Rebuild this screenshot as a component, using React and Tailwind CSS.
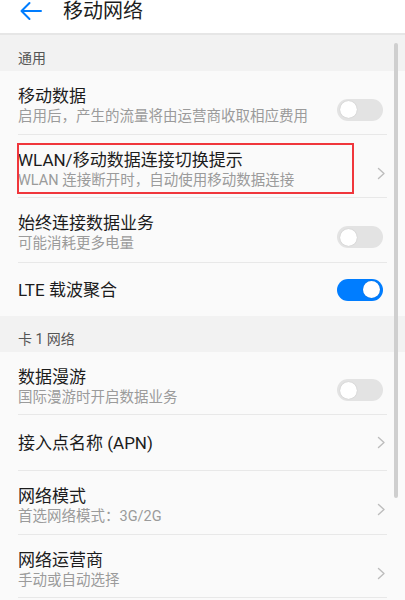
import React from 'react';

const font = { fontFamily: 'Roboto, "Noto Sans CJK SC", sans-serif' };

const Toggle = ({ on }) => (
  <div className={`w-[46px] h-[22px] rounded-full flex items-center px-[3px] ${on ? 'bg-[#007dff] justify-end' : 'bg-[#e3e3e3] justify-start'}`}>
    <div className="w-[17px] h-[17px] rounded-full bg-white shadow-[0_0_1px_rgba(0,0,0,0.25)]" />
  </div>
);

const Chevron = () => (
  <svg width="9" height="13" viewBox="0 0 9 13" className="mr-[1px]">
    <path d="M1.5 1.5 L7 6.5 L1.5 11.5" fill="none" stroke="#bdbdbd" strokeWidth="1.4" strokeLinecap="round" strokeLinejoin="round" />
  </svg>
);

const Section = ({ title }) => (
  <div className="bg-[#f2f2f2] h-[36px] pt-[13px] px-[18px] text-[14px] leading-[20px] text-[#555]">{title}</div>
);

const Row = ({ title, sub, right, h = 'h-[64px]', last, highlight }) => (
  <div className={`relative flex mx-[18px] ${h} ${last ? '' : 'border-b border-[#e8e8e8]'} ${sub ? 'items-start pt-[14px]' : 'items-center'}`}>
    <div className="flex-1 min-w-0">
      <div className="text-[17px] leading-[22px] text-[#1c1c1c]">{title}</div>
      {sub && <div className="text-[14.5px] leading-[20px] text-[#9b9b9b] whitespace-nowrap">{sub}</div>}
    </div>
    <div className={`self-center ${right === 'chevron' ? 'pr-0' : 'pr-[4px]'}`}>
      {right === 'chevron' ? <Chevron /> : <Toggle on={right === 'on'} />}
    </div>
    {highlight && (
      <div className="absolute left-[-1px] top-[8px] w-[337px] h-[51px] border-2 border-[#f0363c]" />
    )}
  </div>
);

export default function App() {
  return (
    <div className="relative w-[405px] h-[600px] overflow-hidden bg-[#fafafa]" style={font}>
      <div className="h-[35px] bg-white border-b-2 border-[#e6e6e6]">
        <div className="flex items-center h-[21px]">
          <svg width="24" height="20" viewBox="0 0 24 20" className="ml-[19px]">
            <path d="M22 10 H3 M10.5 2 L2.5 10 L10.5 18" fill="none" stroke="#007dff" strokeWidth="2" strokeLinecap="round" strokeLinejoin="round" />
          </svg>
          <span className="ml-[20px] text-[20px] leading-[24px] text-[#1c1c1c]">移动网络</span>
        </div>
      </div>

      <Section title="通用" />
      <Row title="移动数据" sub="启用后，产生的流量将由运营商收取相应费用" right="off" />
      <Row title="WLAN/移动数据连接切换提示" sub="WLAN 连接断开时，自动使用移动数据连接" right="chevron" h="h-[63px]" highlight />
      <Row title="始终连接数据业务" sub="可能消耗更多电量" right="off" h="h-[65px]" />
      <Row title="LTE 载波聚合" right="on" h="h-[53px]" last />

      <Section title="卡 1 网络" />
      <Row title="数据漫游" sub="国际漫游时开启数据业务" right="off" h="h-[63px]" />
      <Row title="接入点名称 (APN)" right="chevron" h="h-[56px]" />
      <Row title="网络模式" sub="首选网络模式：3G/2G" right="chevron" />
      <Row title="网络运营商" sub="手动或自动选择" right="chevron" h="h-[63px]" />

      <div className="absolute right-[7px] top-[43px] w-[4px] h-[455px] rounded-full bg-[#cfcfcf]" />
    </div>
  );
}
